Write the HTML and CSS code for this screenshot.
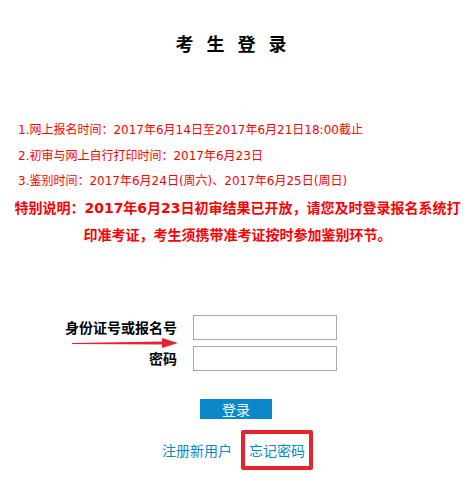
FILE: index.html
```html
<!doctype html>
<html lang="zh-CN">
  <head>
    <meta charset="UTF-8" />
    <meta name="viewport" content="width=device-width, initial-scale=1.0" />
    <title>考生登录</title>
    <link rel="stylesheet" href="styles.css">
  </head>
  <body>
    <div class="page">
      <h1 class="title">考生登录</h1>

      <ul class="info">
        <li>1.网上报名时间：2017年6月14日至2017年6月21日18:00截止</li>
        <li>2.初审与网上自行打印时间：2017年6月23日</li>
        <li>3.鉴别时间：2017年6月24日(周六)、2017年6月25日(周日)</li>
      </ul>

      <p class="notice">
        特别说明：2017年6月23日初审结果已开放，请您及时登录报名系统打<br>印准考证，考生须携带准考证按时参加鉴别环节。
      </p>

      <form class="login" onsubmit="return false">
        <label class="label" for="idno">身份证号或报名号</label>
        <input class="field" id="idno" type="text" />
        <label class="label" for="pwd">密码</label>
        <input class="field" id="pwd" type="password" />

        <!-- annotation arrow -->
        <svg class="arrow" width="110" height="14" viewBox="0 0 110 14">
          <polygon points="0,7 90,5.5 90,2 106,7 90,12 90,8.5 0,8" fill="#e8222e" />
        </svg>
      </form>

      <div class="actions">
        <button class="btn" type="button">登录</button>
      </div>

      <div class="links">
        <a href="#">注册新用户</a>
        <a href="#" class="marked">忘记密码</a>
      </div>
    </div>
  </body>
</html>
```

FILE: styles.css
```css
* {
  margin: 0;
  padding: 0;
  box-sizing: border-box;
}

body {
  font-family: "Noto Sans CJK SC", sans-serif;
  background: #ffffff;
  color: #000000;
}

.page {
  width: 475px;
}

.title {
  margin-top: 31px;
  font-size: 18px;
  line-height: 24px;
  font-weight: bold;
  text-align: center;
  letter-spacing: 13px;
}

.info {
  list-style: none;
  margin-top: 63px;
  padding-left: 18px;
  color: #ff0000;
  font-family: "DejaVu Sans", "Noto Sans CJK SC", sans-serif;
  font-size: 12px;
  line-height: 25.5px;
}

.notice {
  color: #ff0000;
  font-family: "DejaVu Sans", "Noto Sans CJK SC", sans-serif;
  font-size: 14px;
  font-weight: bold;
  line-height: 27px;
  text-align: center;
}

.login {
  position: relative;
  display: grid;
  grid-template-columns: 177px 144px;
  column-gap: 16px;
  row-gap: 6px;
  align-items: center;
  margin-top: 66px;
}

.label {
  text-align: right;
  font-size: 14px;
  font-weight: bold;
}

.field {
  height: 25px;
  border: 1px solid #a9a9a9;
  font-size: 13px;
  padding: 0 3px;
}

.arrow {
  position: absolute;
  left: 72px;
  top: 21px;
}

.actions {
  display: flex;
  justify-content: center;
  margin-top: 28px;
}

.btn {
  width: 72px;
  height: 20px;
  margin-right: 3px;
  background: #0b88c9;
  color: #ffffff;
  border: none;
  font-family: inherit;
  font-size: 14px;
  line-height: 20px;
  cursor: pointer;
}

.links {
  display: flex;
  justify-content: center;
  align-items: center;
  gap: 9px;
  margin-top: 11px;
  font-size: 14px;
  line-height: 20px;
}

.links a {
  color: #0b88c9;
  text-decoration: none;
}

.links .marked {
  border: 4px solid #e8222e;
  border-radius: 2px;
  padding: 6px 4px;
}
```
